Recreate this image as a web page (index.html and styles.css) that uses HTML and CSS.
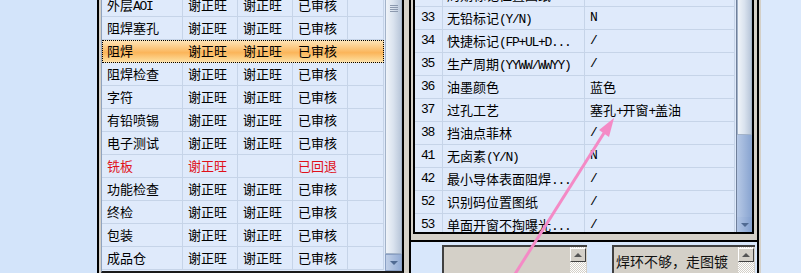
FILE: index.html
```html
<!DOCTYPE html>
<html lang="zh-CN">
<head>
  <meta charset="UTF-8">
  <link rel="stylesheet" href="styles.css">
  <title>流程审核</title>
</head>
<body>

<div class="screen">
  <div class="nav-pane"></div>

  <div class="flow-grid">
    <div class="rows flow-rows">
      <div class="row"><div class="cell">外层<span class="en">AOI</span></div><div class="cell">谢正旺</div><div class="cell">谢正旺</div><div class="cell">已审核</div><div class="cell"></div></div>
      <div class="row"><div class="cell">阻焊塞孔</div><div class="cell">谢正旺</div><div class="cell">谢正旺</div><div class="cell">已审核</div><div class="cell"></div></div>
      <div class="row selected"><div class="cell">阻焊</div><div class="cell">谢正旺</div><div class="cell">谢正旺</div><div class="cell">已审核</div><div class="cell"></div></div>
      <div class="row"><div class="cell">阻焊检查</div><div class="cell">谢正旺</div><div class="cell">谢正旺</div><div class="cell">已审核</div><div class="cell"></div></div>
      <div class="row"><div class="cell">字符</div><div class="cell">谢正旺</div><div class="cell">谢正旺</div><div class="cell">已审核</div><div class="cell"></div></div>
      <div class="row"><div class="cell">有铅喷锡</div><div class="cell">谢正旺</div><div class="cell">谢正旺</div><div class="cell">已审核</div><div class="cell"></div></div>
      <div class="row"><div class="cell">电子测试</div><div class="cell">谢正旺</div><div class="cell">谢正旺</div><div class="cell">已审核</div><div class="cell"></div></div>
      <div class="row returned"><div class="cell">铣板</div><div class="cell">谢正旺</div><div class="cell"></div><div class="cell">已回退</div><div class="cell"></div></div>
      <div class="row"><div class="cell">功能检查</div><div class="cell">谢正旺</div><div class="cell">谢正旺</div><div class="cell">已审核</div><div class="cell"></div></div>
      <div class="row"><div class="cell">终检</div><div class="cell">谢正旺</div><div class="cell">谢正旺</div><div class="cell">已审核</div><div class="cell"></div></div>
      <div class="row"><div class="cell">包装</div><div class="cell">谢正旺</div><div class="cell">谢正旺</div><div class="cell">已审核</div><div class="cell"></div></div>
      <div class="row"><div class="cell">成品仓</div><div class="cell">谢正旺</div><div class="cell">谢正旺</div><div class="cell">已审核</div><div class="cell"></div></div>
    </div>
    <div class="vscroll flow-scroll">
      <div class="thumb"><i></i><i></i><i></i><i></i></div>
      <div class="arrow-btn down"></div>
    </div>
  </div>

  <div class="splitter"></div>

  <div class="detail">
    <div class="param-grid">
      <div class="rows param-rows">
        <div class="row"><div class="cell en">32</div><div class="cell">周期标记位置图纸</div><div class="cell en">/</div></div>
        <div class="row"><div class="cell en">33</div><div class="cell">无铅标记<span class="en">(Y/N)</span></div><div class="cell en">N</div></div>
        <div class="row"><div class="cell en">34</div><div class="cell">快捷标记<span class="en">(FP+UL+D...</span></div><div class="cell en">/</div></div>
        <div class="row"><div class="cell en">35</div><div class="cell">生产周期<span class="en">(YYWW/WWYY)</span></div><div class="cell en">/</div></div>
        <div class="row"><div class="cell en">36</div><div class="cell">油墨颜色</div><div class="cell">蓝色</div></div>
        <div class="row"><div class="cell en">37</div><div class="cell">过孔工艺</div><div class="cell">塞孔<span class="en">+</span>开窗<span class="en">+</span>盖油</div></div>
        <div class="row"><div class="cell en">38</div><div class="cell">挡油点菲林</div><div class="cell en">/</div></div>
        <div class="row"><div class="cell en">41</div><div class="cell">无卤素<span class="en">(Y/N)</span></div><div class="cell en">N</div></div>
        <div class="row"><div class="cell en">42</div><div class="cell">最小导体表面阻焊<span class="en">...</span></div><div class="cell en">/</div></div>
        <div class="row"><div class="cell en">52</div><div class="cell">识别码位置图纸</div><div class="cell en">/</div></div>
        <div class="row"><div class="cell en">53</div><div class="cell">单面开窗不掏曝光<span class="en">...</span></div><div class="cell en">/</div></div>
      </div>
      <div class="vscroll param-scroll">
        <div class="thumb"></div>
        <div class="track"></div>
        <div class="arrow-btn down"></div>
      </div>
    </div>

    <div class="notes">
      <div class="memo">
        <div class="memo-text"></div>
        <div class="memo-scroll"><div class="memo-up"></div></div>
      </div>
      <div class="memo">
        <div class="memo-text">焊环不够，走图镀</div>
        <div class="memo-scroll"><div class="memo-up"></div></div>
      </div>
    </div>
  </div>

  <div class="side-pane"></div>

  <svg class="pointer" width="801" height="273" viewBox="0 0 801 273">
    <line x1="515" y1="274" x2="604" y2="133" stroke="#f48ac6" stroke-width="3"/>
    <polygon points="614,118 609,137 599,130" fill="#f48ac6"/>
  </svg>
</div>

</body>
</html>
```

FILE: styles.css
```css
body {
  margin: 0;
  font-family: "Noto Sans CJK SC", sans-serif;
  font-size: 13px;
  color: #000;
  overflow: hidden;
}

.screen {
  position: relative;
  display: flex;
  width: 801px;
  height: 273px;
  overflow: hidden;
  background-color: #d4d0c8;
}

.nav-pane {
  width: 97px;
  background-color: #d3e4fa;
  border-right: 2px solid #000;
}

/* left grid: process steps */
.flow-grid {
  display: flex;
  width: 300px;
  height: 271px;
  margin-left: 2px;
  border-left: 1px solid #8fa3c0;
  border-right: 2px solid #000;
  border-bottom: 2px solid #1a1a1a;
  background-color: #dfeafb;
  overflow: hidden;
}

.rows {
  flex: 1;
  overflow: hidden;
}

.row {
  display: grid;
  height: 23px;
}

.cell {
  height: 23px;
  line-height: 22px;
  padding-left: 5px;
  border-right: 1px solid #c6d4e8;
  border-bottom: 1px solid #c6d4e8;
  white-space: nowrap;
  overflow: hidden;
  box-sizing: border-box;
}

/* latin runs: half-width like the old bitmap font */
.en {
  font-family: "Liberation Mono", monospace;
  font-size: 13px;
  letter-spacing: -1.3px;
}

.flow-rows .row {
  grid-template-columns: 81px 55px 55px 55px 36px;
}

.flow-rows .row:first-child {
  margin-top: -6px;
}

.row.selected {
  background: linear-gradient(#fee7bd, #fbb55a 55%, #fdd58e 85%, #fee9bf);
  outline: 1px dotted #000;
  outline-offset: -1px;
}

.row.selected .cell {
  border-color: transparent;
}

.row.returned .cell {
  color: #e0101a;
}

/* scrollbars */
.vscroll {
  display: flex;
  flex-direction: column;
  background-color: #c9d6ea;
}

.flow-scroll {
  width: 17px;
  margin-left: 1px;
}

.thumb {
  flex: 1;
  display: flex;
  flex-direction: column;
  align-items: center;
  gap: 1px;
  padding-top: 5px;
  border: 1px solid #a3b3c9;
  border-top: none;
  background: linear-gradient(to right, #f0f4f9, #d9e2ee 50%, #b8c6d9);
  box-sizing: border-box;
}

.thumb i {
  width: 8px;
  height: 1px;
  background-color: #8c99ae;
}

.arrow-btn {
  position: relative;
  height: 17px;
  background: linear-gradient(to right, #c1d0e8, #93acd5);
  border: 1px solid #8aa0c4;
  box-sizing: border-box;
}

.arrow-btn.down::after {
  content: "";
  position: absolute;
  left: 50%;
  top: 6px;
  margin-left: -4px;
  border-left: 4px solid transparent;
  border-right: 4px solid transparent;
  border-top: 4px solid #506a92;
}

.splitter {
  width: 5px;
}

/* right side: process parameters */
.detail {
  display: flex;
  flex-direction: column;
  width: 346px;
  border-left: 2px solid #000;
  border-right: 2px solid #000;
}

.param-grid {
  display: flex;
  height: 234px;
  margin: 0 3px 6px 2px;
  border: 2px solid #000;
  border-top: none;
  background-color: #dfeafb;
  box-sizing: border-box;
}

.param-rows .row {
  grid-template-columns: 28px 142px 150px;
}

.param-rows .row:first-child {
  margin-top: -16px;
}

.param-rows .cell:first-child {
  padding-left: 6px;
}

.param-rows .cell:nth-child(2) {
  padding-left: 4px;
}

.param-scroll {
  width: 15px;
  border-left: 1px solid #6f7f9a;
}

.param-scroll .thumb {
  flex: 0 0 135px;
}

.track {
  flex: 1;
  background: linear-gradient(to right, #b7c9e6, #87a3d0);
}

.param-scroll .arrow-btn {
  height: 15px;
  border: none;
  background: linear-gradient(to right, #b2c5e4, #829fce);
}

.notes {
  flex: 1;
  display: flex;
  gap: 25px;
  padding: 3px 0 0 31px;
  border-top: 2px solid #000;
  background-color: #d8e7fb;
}

.memo {
  display: flex;
  width: 145px;
  height: 40px;
  border-top: 2px solid #404040;
  border-left: 2px solid #404040;
  background-color: #d4d0c8;
  box-sizing: border-box;
}

.memo:last-child {
  width: 143px;
}

.memo-text {
  flex: 1;
  padding: 4px 0 0 2px;
  font-size: 14px;
  color: #111;
  white-space: nowrap;
  overflow: hidden;
}

.memo-scroll {
  width: 16px;
  margin-right: 1px;
  background-color: #fff;
  background-image: repeating-conic-gradient(#d4d0c8 0 25%, #fff 0 50%);
  background-size: 2px 2px;
}

.memo-up {
  position: relative;
  height: 14px;
  margin-top: 1px;
  background-color: #d4d0c8;
  border-top: 1px solid #fff;
  border-left: 1px solid #fff;
  border-right: 1px solid #404040;
  border-bottom: 1px solid #404040;
  box-sizing: border-box;
}

.memo-up::after {
  content: "";
  position: absolute;
  left: 3px;
  top: 4px;
  border-left: 4px solid transparent;
  border-right: 4px solid transparent;
  border-bottom: 4px solid #555;
}

.side-pane {
  flex: 1;
  margin-left: 2px;
  background-color: #dbe9fc;
}

.pointer {
  position: absolute;
  left: 0;
  top: 0;
  pointer-events: none;
}
```
